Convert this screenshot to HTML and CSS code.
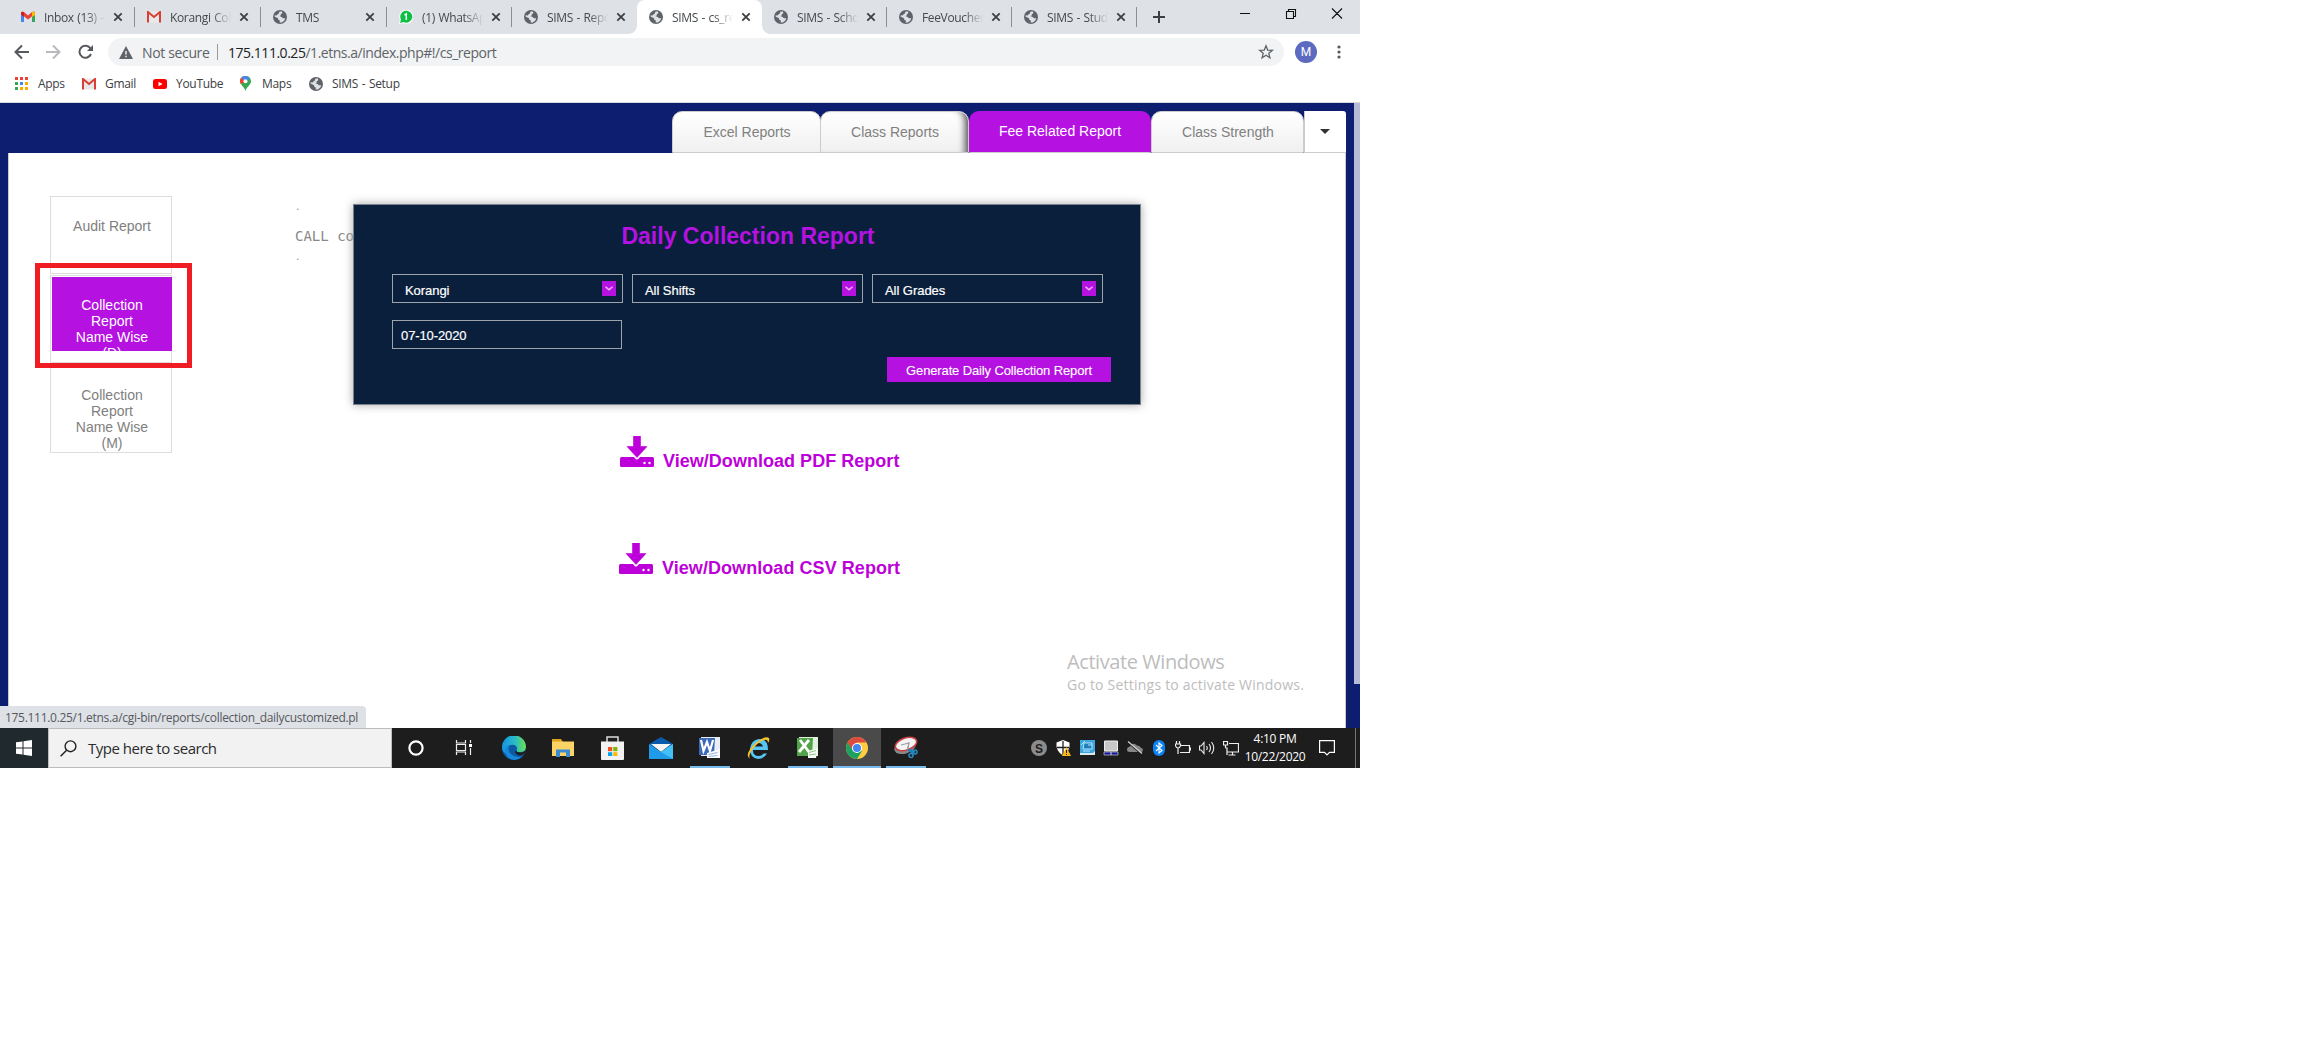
FILE: index.html
```html
<!DOCTYPE html>
<html lang="en">
<head>
<meta charset="utf-8">
<title>SIMS - cs_report</title>
<link rel="stylesheet" href="styles.css">
</head>
<body>
<svg class="defs" aria-hidden="true">
  <symbol id="globe" viewBox="0 0 14 14"><circle cx="7" cy="7" r="7" fill="#5f6368"/><path d="M6.600 1.400 9 1.600 9.300 3.200 7.700 4.300 7.900 5.500 6.300 6.100 8.600 6.900 10 8.200 12.300 8.300 11.200 10.800 8.700 12.600 6.500 12.500 7 10.800 5.300 9.800 5 8.200 1.500 6.600 1.800 5.200 3.700 5.600 4.600 4.200 5.700 3.800z" fill="#dee1e6"/></symbol>
  <symbol id="close" viewBox="0 0 10 10"><path d="M1.300 1.300 8.700 8.700M8.700 1.300 1.300 8.700" stroke="#3c4043" stroke-width="1.800"/></symbol>
  <symbol id="gmail" viewBox="0 0 14 12"><path d="M1 .5h12v11H1z" fill="#e8e8e8"/><path d="M1 11.500V1l6 5 6-5v10.500" fill="none" stroke="#d93f34" stroke-width="2"/></symbol>
  <symbol id="download" viewBox="0 0 34 32"><rect y="21" width="34" height="10" rx="1.500"/><path d="M13.500 0h7v10.500h6.500L17 21.500 7 10.500h6.500z" stroke="#fff" stroke-width="4" stroke-linejoin="round"/><path d="M13.500 0h7v10.500h6.500L17 21.500 7 10.500h6.500z" stroke="#bd00d9" stroke-width=".6" stroke-linejoin="round"/><circle cx="24.500" cy="27" r="1.200" fill="#fff"/><circle cx="29.500" cy="27" r="1.200" fill="#fff"/></symbol>
</svg>
<div class="screen">
  <div class="tabstrip">
    <div class="tab w126"><svg class="fav" viewBox="0 0 14 14"><path d="M0 2h3v10H0z" fill="#4285f4"/><path d="M11 2h3v10h-3z" fill="#34a853"/><path d="M0 3V2q1.500-1 3 0l4 3.500L11 2q1.500-1 3 0v2L7 9.500 0 4z" fill="#ea4335"/><path d="M11 2q2.500-1 3 1v2l-3 2z" fill="#fbbc04"/><path d="M0 2.500v2l3 2.500V2z" fill="#c5221f"/></svg><span class="label">Inbox (13) - korangi</span><svg class="x"><use href="#close"/></svg></div>
    <div class="tab w126"><svg class="fav"><use href="#gmail" y="1" height="12"/></svg><span class="label">Korangi College</span><svg class="x"><use href="#close"/></svg></div>
    <div class="tab w126"><svg class="fav"><use href="#globe"/></svg><span class="label">TMS</span><svg class="x"><use href="#close"/></svg></div>
    <div class="tab nosep"><svg class="fav" viewBox="0 0 14 14"><path d="M0 14 1 10A7 7 0 1 1 4 13z" fill="#fff"/><path d="M1 13l1-3.500A6 6 0 1 1 4.500 12z" fill="#0dbf42"/><path d="M5.500 5.200 7.300 4v6" fill="none" stroke="#fff" stroke-width="1.500"/></svg><span class="label">(1) WhatsApp</span><svg class="x"><use href="#close"/></svg></div>
    <div class="tab before-active"><svg class="fav"><use href="#globe"/></svg><span class="label">SIMS - Reports</span><svg class="x"><use href="#close"/></svg></div>
    <div class="tab active"><svg class="fav"><use href="#globe"/></svg><span class="label">SIMS - cs_report</span><svg class="x"><use href="#close"/></svg></div>
    <div class="tab"><svg class="fav"><use href="#globe"/></svg><span class="label">SIMS - School</span><svg class="x"><use href="#close"/></svg></div>
    <div class="tab"><svg class="fav"><use href="#globe"/></svg><span class="label">FeeVoucher -</span><svg class="x"><use href="#close"/></svg></div>
    <div class="tab"><svg class="fav"><use href="#globe"/></svg><span class="label">SIMS - Student</span><svg class="x"><use href="#close"/></svg></div>
    <svg class="plus" viewBox="0 0 12 12"><path d="M6 0v12M0 6h12" stroke="#3c4043" stroke-width="2"/></svg>
    <svg class="winbtns" width="104" height="12" viewBox="0 0 104 12"><path d="M0 5.500h10M46.500 3.500h7v7h-7zM48.500 3V1.500h7v7H54M92 .5l10 10M102 .5l-10 10" fill="none" stroke="#111" stroke-width="1.100"/></svg>
  </div>
  <div class="toolbar">
    <svg class="nav" width="80" height="16" viewBox="0 0 80 16"><path d="M15 8H2M8 1.500 1.500 8 8 14.500" fill="none" stroke="#55585c" stroke-width="2"/><path d="M32 8h13M39 1.500 45.500 8 39 14.500" fill="none" stroke="#b8babd" stroke-width="2"/><path d="M76.500 4.500A6 6 0 1 0 77 10" fill="none" stroke="#55585c" stroke-width="2"/><path d="M79 1v6h-6z" fill="#55585c"/></svg>
    <div class="omnibox">
      <svg class="warn" viewBox="0 0 14 13"><path d="M7 0l7 13H0z" fill="#5f6368"/><path d="M7 5v3.500M7 9.700v1.500" stroke="#fff" stroke-width="1.300"/></svg>
      <span class="insecure">Not secure</span><span class="bar"></span><span class="url"><b>175.111.0.25</b>/1.etns.a/index.php#!/cs_report</span>
      <svg class="star" viewBox="0 0 16 16"><path d="M8 1.800l1.700 4.300 4.600.3-3.500 2.900 1.100 4.500L8 11.300l-3.900 2.500 1.100-4.500L1.700 6.400l4.600-.3z" fill="none" stroke="#5f6368" stroke-width="1.300"/></svg>
    </div>
    <span class="avatar">M</span>
    <svg class="dots" viewBox="0 0 4 14"><circle cx="2" cy="2" r="1.600"/><circle cx="2" cy="7" r="1.600"/><circle cx="2" cy="12" r="1.600"/></svg>
  </div>
  <div class="bookmarks">
    <span class="bm apps"><svg width="13" height="13" viewBox="0 0 13 13"><path d="M0 0h3v3H0zM5 0h3v3H5zM10 0h3v3h-3z" fill="#ea4335"/><path d="M0 5h3v3H0zM10 10h3v3h-3zM5 10h3v3H5z" fill="#f9ab00"/><path d="M5 5h3v3H5z" fill="#4285f4"/><path d="M0 5h3v3H0zM0 10h3v3H0z" fill="#34a853"/><path d="M10 5h3v3h-3z" fill="#f9ab00"/></svg>Apps</span>
    <span class="bm gm"><svg width="14" height="12"><use href="#gmail"/></svg>Gmail</span>
    <span class="bm yt"><svg width="14" height="12" viewBox="0 0 14 12"><rect y="1" width="14" height="10" rx="2.500" fill="#f00"/><path d="M5.500 3.700v4.600L9.500 6z" fill="#fff"/></svg>YouTube</span>
    <span class="bm mp"><svg width="11" height="15" viewBox="0 0 11 15"><path d="M5.500 15C4.500 10.500 0 9 0 5.200A5.500 5.300 0 0 1 11 5.200C11 9 6.500 10.500 5.500 15z" fill="#34a853"/><path d="M1 8 9.500 1.500A5.500 5.300 0 0 0 0 5.200Q0 7 1 8z" fill="#fbbc04"/><path d="M5.500 5.300 1.200 1.800A5.500 5.300 0 0 0 .8 8z" fill="#ea4335"/><path d="M1.200 1.800A5.500 5.300 0 0 1 9.800 2L5.500 6z" fill="#4285f4"/><circle cx="5.500" cy="5.200" r="2" fill="#fff"/></svg>Maps</span>
    <span class="bm ss"><svg width="14" height="14"><use href="#globe"/></svg>SIMS - Setup</span>
  </div>
  <div class="page">
    <div class="report-tabs">
      <div class="rtab r1">Excel Reports</div><div class="rtab r2">Class Reports</div><div class="rtab ron">Fee Related Report</div><div class="rtab r4">Class Strength</div><div class="rmore"><i></i></div>
    </div>
    <div class="content">
      <div class="side">
        <div class="sbox s1">Audit Report</div>
        <div class="sbox s2"><div>Collection Report Name Wise (D)</div></div>
        <div class="sbox s3">Collection Report Name Wise (M)</div>
        <div class="callout"></div>
      </div>
      <div class="log"><p>.</p><p class="call">CALL co</p><p>.</p></div>
      <div class="main">
        <div class="card">
          <h1>Daily Collection Report</h1>
          <div class="selects">
            <div class="sel">Korangi<svg viewBox="0 0 14 15"><path d="M3.500 5.800 7 8.800l3.500-3" fill="none" stroke="#efb9f8" stroke-width="1.500"/></svg></div>
            <div class="sel">All Shifts<svg viewBox="0 0 14 15"><path d="M3.500 5.800 7 8.800l3.500-3" fill="none" stroke="#efb9f8" stroke-width="1.500"/></svg></div>
            <div class="sel">All Grades<svg viewBox="0 0 14 15"><path d="M3.500 5.800 7 8.800l3.500-3" fill="none" stroke="#efb9f8" stroke-width="1.500"/></svg></div>
          </div>
          <div class="date">07-10-2020</div>
          <div class="gen">Generate Daily Collection Report</div>
        </div>
        <div class="dl"><svg><use href="#download"/></svg>View/Download PDF Report</div>
        <div class="dl csv"><svg><use href="#download"/></svg>View/Download CSV Report</div>
      </div>
    </div>
    <div class="scroll"></div>
    <div class="watermark"><div class="w1">Activate Windows</div><div class="w2">Go to Settings to activate Windows.</div></div>
    <div class="status"><span>175.111.0.25/1.etns.a/cgi-bin/reports/collection_dailycustomized.pl</span></div>
  </div>
  <div class="taskbar">
    <div class="start"><svg width="16" height="16" viewBox="0 0 16 16"><path d="M0 2.300 6.500 1.400v6.100H0zM7.500 1.200 16 0v7.500H7.500zM0 8.500h6.500v6.100L0 13.700zM7.500 8.500H16V16l-8.500-1.200z" fill="#fff"/></svg></div>
    <div class="search"><svg width="17" height="17" viewBox="0 0 17 17"><circle cx="10.500" cy="6.300" r="5.400" fill="none" stroke="#222" stroke-width="1.400"/><path d="M6.600 10.200.6 16.300" stroke="#222" stroke-width="1.500"/></svg><span>Type here to search</span></div>
    <div class="apps-row">
      <div class="app"><svg viewBox="0 0 24 24"><circle cx="12" cy="12" r="6.600" fill="none" stroke="#fff" stroke-width="2.200"/></svg></div>
      <div class="app"><svg viewBox="0 0 24 24"><path d="M3.500 4v3h9V4M3.500 19v-3h9v3M3.500 8.500h9v6h-9zM17.500 4v3M17.500 19v-7" fill="none" stroke="#eee" stroke-width="1.200"/><path d="M16 8h3v3h-3z" fill="#fff"/></svg></div>
      <div class="app"><svg viewBox="0 0 24 24"><defs><linearGradient id="e" x2="1"><stop stop-color="#1593dc"/><stop offset=".5" stop-color="#25b9cf"/><stop offset="1" stop-color="#6be04f"/></linearGradient></defs><circle cx="12" cy="12" r="12" fill="#0c59a4"/><path d="M0 12A12 12 0 0 1 24 10.500Q24 16 18 16q-4 0-3.500-2 1.500-2-.5-4-2-2-5.500-1Q3 10 3 17 0 15 0 12z" fill="url(#e)"/><path d="M3 17Q2 11 8 9q-3 4 0 8 3 4.500 12 4Q16 24 12 24 6 23.500 3 17z" fill="#1689dc"/><path d="M24 12.500Q23 17 18 16.500q-4 0-3.500-2.500-3 2 .5 4.500 4 2.500 8-1.500z" fill="#1e1e1e"/></svg></div>
      <div class="app"><svg viewBox="0 0 24 24"><path d="M1 3h9l2 3h-11z" fill="#dfa31a"/><path d="M1 5.500h22V20H1z" fill="#fbd465"/><path d="M5 13.500h14V21h-4v-4.500H9V21H5z" fill="#3a8bd1"/></svg></div>
      <div class="app"><svg viewBox="0 0 24 24"><path d="M7 7V1h11v6" fill="none" stroke="#ddd" stroke-width="1.500"/><path d="M1 5.500h23V23q0 1-1 1H2q-1 0-1-1z" fill="#f2f2f2"/><path d="M8 11h4.200v4.200H8z" fill="#f25022"/><path d="M13.200 11h4.200v4.200h-4.200z" fill="#7fba00"/><path d="M8 16.200h4.200V20H8z" fill="#00a4ef"/><path d="M13.200 16.200h4.200V20h-4.200z" fill="#ffb900"/></svg></div>
      <div class="app"><svg viewBox="0 0 24 24"><path d="M0 8 12 1l12 7v4H0z" fill="#0b59ad"/><path d="M2 8h20l-10 8z" fill="#f4f4f4"/><path d="M0 8l12 8 12-8v15H0z" fill="#1f9bea"/><path d="M12 16 24 8v15z" fill="#45c0f6"/></svg></div>
      <div class="app run word"><svg viewBox="0 0 24 24"><path d="M3 1h19v19H3z" fill="#e9eff9"/><path d="M1 2h16l-1 17H1z" fill="#3c69b8"/><path d="M3 4l2.500 11L9 6l3 9 3-11" fill="none" stroke="#fff" stroke-width="2.200"/><path d="M9 17l13-4v9H9z" fill="#f7f9fd"/><path d="M10.500 18.500l9-2M10.500 20.500l9-1" stroke="#9ab4da"/></svg></div>
      <div class="app"><svg viewBox="0 0 24 24"><path d="M20 14H6q0 6 5.500 6 3.500 0 5-2.500H20Q17 23 11 23 3 22 3 13 4 4 12 3q9 0 9 11zM7 10.500h9Q15 7 11.500 7T7 10.500z" fill="#57c6f4"/><path d="M3 23Q-3 19 7 8.500 18-1 22 2q1 2-1 5 0-4-4-3Q11 6 5 14q-4 6-2 9z" fill="#f5c32c"/></svg></div>
      <div class="app run"><svg viewBox="0 0 24 24"><path d="M3 1h19v19H3z" fill="#e3f2df"/><path d="M1 2h16l-1 18H1z" fill="#53a34a"/><path d="M4 4l9 12M13 4 3 16" stroke="#fff" stroke-width="2.800"/><path d="M12 15l10-3-2 10h-8z" fill="#f7fdf5"/><path d="M13 16.500l7-2M13 19l7-1" stroke="#8ec487"/></svg></div>
      <div class="app run chrome"><svg viewBox="0 0 24 24"><circle cx="12" cy="12" r="11" fill="#ffcd40"/><path d="M2.500 6.500A11 11 0 0 1 21.500 6.500H12L7 14z" fill="#dd4b3e"/><path d="M2.500 6.500A11 11 0 0 0 12 23l5-8-9.500-1z" fill="#1da15f"/><circle cx="12" cy="12" r="5" fill="#fff"/><circle cx="12" cy="12" r="4" fill="#4285f4"/></svg></div>
      <div class="app run"><svg viewBox="0 0 24 24"><ellipse cx="11" cy="11" rx="11" ry="6.500" transform="rotate(-18 11 11)" fill="#888"/><ellipse cx="12" cy="8" rx="11" ry="6" transform="rotate(-18 12 8)" fill="#f4f4f4" stroke="#c93f43" stroke-width="1.500"/><path d="M7 9l8-2-2 7M15 6l-1 8" stroke="#999" fill="none"/><path d="M14 14l7 2M16 13l2 5" stroke="#1b7fb8" stroke-width="2"/><circle cx="21" cy="16" r="2" fill="none" stroke="#2789c2" stroke-width="1.600"/><circle cx="17" cy="19.500" r="2" fill="none" stroke="#2789c2" stroke-width="1.600"/></svg></div>
    </div>
    <div class="tray">
      <svg viewBox="0 0 16 16"><circle cx="8" cy="8" r="8" fill="#8b8b8b"/><text x="8" y="12.500" text-anchor="middle" class="skype">S</text></svg>
      <svg viewBox="0 0 16 16"><path d="M8 0l6.500 2.500Q15.500 11 8 15.500.5 11 1.500 2.500z" fill="#fff"/><path d="M8 1v14M2 7.500h12" stroke="#222" stroke-width="1.300"/><path d="M11.500 7l4.500 9H7z" fill="#fdb813"/><path d="M11.500 10v3M11.500 14v1" stroke="#222"/></svg>
      <svg viewBox="0 0 16 16"><path d="M1 0h15v15H1z" fill="#3ba6df"/><path d="M1 13h13l2-2v4H1z" fill="#dce9ee"/><path d="M5 3h8v6H4zM4 11h7M2 5l4-4M9 5h4" fill="#1d80bd" stroke="#b4e4f8"/></svg>
      <svg viewBox="0 0 16 16"><path d="M1.500 1h13v10h-13z" fill="#c7c7c7" stroke="#eee"/><path d="M1 12h14v3H1z" fill="#171797" stroke="#ccc" stroke-width=".7"/><path d="M8 12v3" stroke="#ddd"/></svg>
      <svg viewBox="0 0 16 16"><path d="M2.500 12Q0 12 0 9.500T3 6.500Q4 3 7.500 4 9 4 10 5.500q3 0 3.500 2Q16 8 16 10q0 2-2 2z" fill="#858585"/><path d="M1 2.500l14 12" stroke="#1c1c1c" stroke-width="1.500"/><path d="M1 1.500l14 12" stroke="#d5d5d5" stroke-width="1.200"/></svg>
      <svg viewBox="0 0 16 16"><rect x="2" width="12" height="16" rx="6" fill="#0a84f5"/><path d="M5 5l6 5.500L8 13V3l3 2.500L5 11" fill="none" stroke="#fff" stroke-width="1.100"/></svg>
      <svg viewBox="0 0 16 16"><path d="M6 5.500h8.500v7H5M15.500 7.500v3M1.500 1v3M4.500 1v3M.5 4h5v2q-1 2-2.500 2T.5 6zM3 8v6" fill="none" stroke="#eee" stroke-width="1.200"/></svg>
      <svg viewBox="0 0 16 16"><path d="M.5 6H2l3-3.500v11L2 10H.5zM7.500 6q1.500 2 0 4M10 4q3 4 0 8M12.500 2q4.500 6 0 12" fill="none" stroke="#eee" stroke-width="1.100"/></svg>
      <svg viewBox="0 0 16 16"><path d="M6 3.500h9.500V12H4M9.500 12v3M5.500 15h7M.5 1.500h4V5h-4zM2.500 5v3M2.500 8H4v7" fill="none" stroke="#eee" stroke-width="1.200"/></svg>
    </div>
    <div class="clock"><div>4:10 PM</div><div>10/22/2020</div></div>
    <svg class="note" width="16" height="16" viewBox="0 0 16 16"><path d="M.6.600h14.800v11.800H10.500L8 15l-2.500-2.600H.6z" fill="none" stroke="#fff" stroke-width="1.200"/></svg>
    <span class="peek"></span>
  </div>
</div>
</body>
</html>
```
FILE: styles.css
```css
* { box-sizing: border-box; }
body { margin: 0; background: #fff; font-family: "Open Sans", "Noto Sans", sans-serif; }
.defs { position: absolute; width: 0; height: 0; }
.screen { width: 1360px; height: 768px; display: flex; flex-direction: column; overflow: hidden; white-space: nowrap; }

/* browser tabs */
.tabstrip { height: 34px; background: #dee1e6; display: flex; align-items: center; padding-left: 9px; }
.tab { width: 125px; height: 34px; display: flex; align-items: center; padding-left: 12px; font-size: 12px; letter-spacing: -.35px; word-spacing: .8px; color: #45494d; background: linear-gradient(#8b8e92, #8b8e92) right 7px / 1px 20px no-repeat; }
.tab.w126 { width: 126px; }
.fav { width: 14px; height: 14px; margin-right: 9px; flex: none; }
.label { width: 62px; overflow: hidden; -webkit-mask-image: linear-gradient(90deg, #000 42px, transparent 61px); mask-image: linear-gradient(90deg, #000 42px, transparent 61px); }
.x { width: 10px; height: 10px; margin-left: 7px; }
.tab.before-active { background: none; }
.tab.active { background: #fff; border-radius: 8px 8px 0 0; position: relative; }
.tab.active::before, .tab.active::after { content: ""; position: absolute; bottom: 0; width: 8px; height: 8px; }
.tab.active::before { left: -8px; background: radial-gradient(circle at 0 0, transparent 7.500px, #fff 8px); }
.tab.active::after { right: -8px; background: radial-gradient(circle at 100% 0, transparent 7.500px, #fff 8px); }
.plus { width: 12px; height: 12px; margin-left: 16px; }
.winbtns { margin: -6px 16px 0 auto; }

/* toolbar */
.toolbar { height: 36px; display: flex; align-items: center; padding-left: 14px; }
.nav { flex: none; margin-right: 14px; }
.omnibox { width: 1176px; height: 28px; border-radius: 14px; background: #f1f3f4; display: flex; align-items: center; padding-left: 11px; font-size: 14px; color: #5f6368; }
.warn { width: 14px; height: 13px; margin-right: 9px; }
.insecure { width: 75px; letter-spacing: -.35px; }
.bar { width: 1px; height: 16px; background: #999; margin-right: 10px; }
.url { letter-spacing: -.47px; }
.url b { font-weight: 400; color: #202124; }
.star { width: 16px; height: 16px; margin: 0 10px 0 auto; }
.avatar { width: 22px; height: 22px; border-radius: 50%; background: #5c6bc0; color: #fff; font: 12px/22px Roboto, sans-serif; text-align: center; margin-left: 11px; }
.dots { width: 4px; height: 14px; margin-left: 20px; fill: #55585c; }

.bookmarks { height: 33px; display: flex; align-items: center; padding: 0 0 5px 15px; border-bottom: 1px solid #d8d9dc; font-size: 12px; letter-spacing: -.3px; word-spacing: .8px; color: #3c4043; }
.bm { display: flex; align-items: center; gap: 9px; }
.apps { width: 67px; gap: 10px; }
.gm { width: 71px; }
.yt { width: 87px; }
.mp { width: 69px; gap: 11px; }

/* page */
.page { height: 625px; background: #0d1d70; position: relative; padding: 8px 0 0 8px; font-family: "Liberation Sans", Arial, sans-serif; }
.report-tabs { height: 42px; display: flex; padding-left: 664px; font-size: 14px; text-align: center; color: #808080; }
.rtab { background: linear-gradient(#fff, #f0f0f0); border: 1px solid #ccc; border-radius: 10px 10px 0 0; line-height: 40px; padding-left: 1px; }
.r1 { width: 149px; margin-right: -1px; }
.r2 { width: 149px; box-shadow: inset -9px 0 7px -6px #555; }
.ron { width: 182px; background: #b512e2; border-color: #b512e2; border-bottom-color: #ccc; color: #fff; line-height: 38px; padding-left: 0; }
.r4 { width: 153px; }
.rmore { width: 42px; background: #fff; border-bottom: 1px solid #ccc; border-left: 1px solid #ccc; border-top-right-radius: 3px; display: flex; align-items: center; justify-content: center; padding-right: 1px; }
.rmore i { border: 5px solid transparent; border-top-color: #333; border-bottom: 0; }
.content { width: 1338px; height: 575px; background: #fff; border-left: 1px solid #ccc; border-right: 1px solid #ccc; display: flex; }
.side { width: 244px; padding: 43px 0 0 41px; position: relative; font-size: 14px; line-height: 16px; color: #808080; text-align: center; }
.sbox { width: 122px; border: 1px solid #ddd; white-space: normal; padding: 21px 20px 0 22px; }
.s1 { height: 78px; margin-bottom: 1px; }
.s2 { height: 88px; padding: 1px 0 0 1px; }
.s2 div { width: 120px; height: 74px; background: #b512e2; color: #fff; overflow: hidden; padding: 20px 20px 0; }
.s3 { height: 90px; border-top: 0; padding-top: 24px; }
.callout { position: absolute; left: 26px; top: 110px; width: 157px; height: 105px; border: 5px solid #ef1c24; }
.log { width: 100px; padding: 45px 0 0 42px; font-family: "DejaVu Sans Mono", monospace; color: #888; overflow: hidden; }
.log p { margin: 0; font-size: 9px; line-height: 18px; }
.log .call { font-size: 14px; line-height: 20px; padding: 10px 0 2px; }
.main { width: 788px; padding-top: 51px; }
.card { height: 201px; background: #091f3c; border: 1px solid #79828d; box-shadow: 0 0 9px #aaa; padding: 18px 29px 0 38px; font-size: 13px; color: #fff; -webkit-text-stroke: .2px #fff; }
h1 { margin: 0 -2px 0 -9px; font-size: 23px; line-height: 26px; font-weight: bold; text-align: center; color: #b512e2; -webkit-text-stroke: 0; }
.selects { display: flex; gap: 9px; margin-top: 25px; }
.sel { width: 231px; height: 29px; border: 1px solid #9da3aa; display: flex; justify-content: space-between; padding: 0 6px 0 12px; line-height: 31px; letter-spacing: -.05px; }
.sel svg { width: 14px; height: 15px; background: #b512e2; margin-top: 6px; }
.date { width: 230px; height: 29px; margin-top: 17px; border: 1px solid #9da3aa; padding-left: 8px; line-height: 29px; letter-spacing: -.1px; }
.gen { width: 224px; height: 25px; margin: 8px 0 0 auto; background: #b512e2; text-align: center; line-height: 27px; letter-spacing: -.13px; -webkit-text-stroke: .1px #fff; }
.dl { display: flex; gap: 9px; height: 31px; margin: 31px 0 0 267px; color: #bd00d9; font-size: 18px; font-weight: bold; line-height: 51px; letter-spacing: .03px; }
.dl svg { width: 34px; height: 32px; fill: #bd00d9; }
.dl.csv { margin-top: 76px; margin-left: 266px; letter-spacing: .06px; }
.scroll { position: absolute; right: 0; top: 0; width: 6px; height: 581px; background: #b5bad6; }
.watermark { position: absolute; left: 1067px; top: 545px; color: #bdbdbd; font-family: "Open Sans", sans-serif; }
.w1 { font-size: 20px; line-height: 28px; letter-spacing: -.42px; }
.w2 { font-size: 14px; line-height: 18px; letter-spacing: .22px; }
.status { position: absolute; left: 0; bottom: 0; width: 366px; height: 22px; background: #dee1e6; border-top-right-radius: 4px; padding-left: 5px; font: 12px/24px "Open Sans", sans-serif; letter-spacing: -.3px; color: #55585c; }

/* taskbar */
.taskbar { height: 40px; background: #1d1d1d; display: flex; align-items: center; color: #fff; }
.start { width: 48px; height: 40px; background: #20292e; display: flex; align-items: center; justify-content: center; }
.search { width: 344px; height: 40px; background: #f2f2f2; border: 1px solid #bcbcbc; display: flex; align-items: center; gap: 11px; padding-left: 11px; font-size: 15px; letter-spacing: -.5px; color: #2c2c2c; }
.apps-row { display: flex; gap: 1px; width: 539px; }
.app { width: 48px; height: 40px; display: flex; align-items: center; justify-content: center; flex: none; }
.app svg { width: 24px; height: 24px; }
.run { background: linear-gradient(#76b9ed, #76b9ed) center bottom / 40px 2px no-repeat; }
.chrome { background: linear-gradient(#76b9ed, #76b9ed) center bottom / 48px 2px no-repeat #4a4a4a; }
.tray { display: flex; gap: 8px; margin-left: 100px; }
.tray svg { width: 16px; height: 16px; }
.skype { font: bold 12px "Liberation Sans", sans-serif; fill: #1c1c1c; }
.clock { width: 72px; font-size: 12px; line-height: 18px; letter-spacing: -.3px; text-align: center; }
.note { margin-left: 8px; }
.peek { width: 1px; height: 40px; margin-left: auto; margin-right: 4px; background: #777; }
```
